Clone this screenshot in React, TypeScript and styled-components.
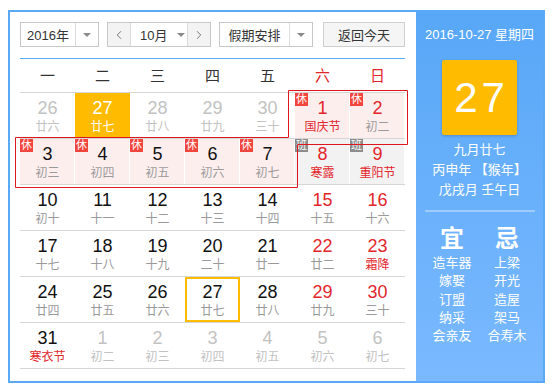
import React from 'react';
import styled, { createGlobalStyle, css } from 'styled-components';
import { ChevronLeft, ChevronRight } from 'lucide-react';

const GlobalStyle = createGlobalStyle`
  html, body { margin: 0; padding: 0; background: #fff; }
  body { font-family: "Liberation Sans", "Noto Sans CJK SC", sans-serif; }
`;

const Page = styled.div`
  padding: 10px 0 0 8px;
`;

const Widget = styled.div`
  display: flex;
  width: 537px;
  height: 373px;
  box-sizing: border-box;
  border: 2px solid #5aa9f7;
  background: #fff;
`;

const Main = styled.div`
  width: 406px;
  box-sizing: border-box;
  padding: 10px 11px 0 10px;
`;

const Toolbar = styled.div`
  display: flex;
  gap: 8px;
  height: 25px;
`;

const Select = styled.div<{ $w: number }>`
  display: flex;
  width: ${(p) => p.$w}px;
  height: 25px;
  box-sizing: border-box;
  border: 1px solid #c8c8c8;
  background: #fff;
  font-size: 13px;
  color: #333;
  white-space: nowrap;
`;

const SelectLabel = styled.div`
  flex: 1;
  display: flex;
  align-items: center;
  justify-content: center;
`;

const SelectArrow = styled.div`
  width: 22px;
  display: flex;
  align-items: center;
  justify-content: center;
  border-left: 1px solid #dcdcdc;
`;

const Caret = styled.span`
  flex: none;
  width: 0;
  height: 0;
  border-left: 4px solid transparent;
  border-right: 4px solid transparent;
  border-top: 4px solid #8a8a8a;
`;

const NavBtn = styled.div<{ $side: 'l' | 'r' }>`
  flex: none;
  width: 22px;
  display: flex;
  align-items: center;
  justify-content: center;
  background: #f3f3f3;
  color: #666;
  ${(p) => (p.$side === 'l' ? 'border-right: 1px solid #dcdcdc;' : 'border-left: 1px solid #dcdcdc;')}
`;

const MonthLabel = styled.div`
  flex: 1;
  min-width: 0;
  display: flex;
  align-items: center;
  padding-left: 9px;
  gap: 10px;
  white-space: nowrap;
`;

const TodayButton = styled.div`
  margin-left: auto;
  width: 82px;
  height: 25px;
  box-sizing: border-box;
  border: 1px solid #cfcfcf;
  background: #f5f5f5;
  font-size: 13px;
  color: #333;
  display: flex;
  align-items: center;
  justify-content: center;
`;

const BlueLine = styled.div`
  margin-top: 11px;
  height: 1px;
  background: #5aa9f7;
`;

const WeekHeader = styled.div`
  display: grid;
  grid-template-columns: repeat(7, 55px);
  height: 33px;
  line-height: 33px;
  font-size: 15px;
  text-align: center;
`;

const WeekDay = styled.div<{ $red?: boolean }>`
  color: ${(p) => (p.$red ? '#e3262c' : '#333')};
`;

const Grid = styled.div`
  position: relative;
  border-top: 1px solid #d6d6d6;
`;

const Row = styled.div`
  display: grid;
  grid-template-columns: repeat(7, 55px);
  border-bottom: 1px solid #d6d6d6;
  &:last-child { border-bottom: none; }
`;

type Bg = 'holiday' | 'work' | 'today' | undefined;
type Tone = 'other' | 'normal' | 'weekend';

const Cell = styled.div<{ $bg?: Bg; $sel?: boolean }>`
  position: relative;
  height: 45px;
  box-sizing: border-box;
  padding-top: 4px;
  text-align: center;
  ${(p) =>
    p.$bg === 'holiday' &&
    css`
      background: #fdeeee;
      box-shadow: inset -1px 0 0 #fff;
    `}
  ${(p) =>
    p.$bg === 'work' &&
    css`
      background: #f2f2f2;
      box-shadow: inset -1px 0 0 #fff;
    `}
  ${(p) =>
    p.$bg === 'today' &&
    css`
      background: #ffbb00;
    `}
  ${(p) =>
    p.$sel &&
    css`
      box-shadow: inset 0 0 0 2px #ffbb00;
    `}
`;

const DayNum = styled.div<{ $tone: Tone; $today?: boolean }>`
  font-size: 18px;
  line-height: 22px;
  color: ${(p) =>
    p.$today ? '#fff' : p.$tone === 'other' ? '#c2c2c2' : p.$tone === 'weekend' ? '#e3262c' : '#111'};
`;

const Lunar = styled.div<{ $tone: Tone; $fest?: boolean; $today?: boolean }>`
  font-size: 12px;
  line-height: 16px;
  color: ${(p) =>
    p.$today ? '#fff' : p.$fest ? '#e3262c' : p.$tone === 'other' ? '#c2c2c2' : '#9a9a9a'};
`;

const Badge = styled.span<{ $kind: 'rest' | 'work' }>`
  position: absolute;
  left: 0;
  top: 0;
  width: 13px;
  height: 13px;
  font-size: 11px;
  line-height: 13px;
  text-align: center;
  color: #fff;
  background: ${(p) => (p.$kind === 'rest' ? '#f2453d' : '#8c8c8c')};
`;

const Outline = styled.svg`
  position: absolute;
  left: -6px;
  top: -4px;
  overflow: visible;
  pointer-events: none;
`;

const Side = styled.div`
  flex: 1;
  background: linear-gradient(#58a7f7, #7ab9ff);
  color: #fff;
  display: flex;
  flex-direction: column;
  align-items: center;
  padding-top: 13px;
`;

const SideDate = styled.div`
  font-size: 13px;
  line-height: 20px;
`;

const BigDay = styled.div`
  margin-top: 15px;
  width: 75px;
  height: 75px;
  background: #ffbb00;
  border-radius: 2px;
  box-shadow: 0 1px 3px rgba(0, 0, 0, 0.2);
  display: flex;
  align-items: center;
  justify-content: center;
  font-size: 42px;
  letter-spacing: 4px;
  text-indent: 4px;
`;

const LunarInfo = styled.div`
  margin-top: 5px;
  font-size: 13px;
  line-height: 20px;
  text-align: center;
`;

const SideRule = styled.div`
  margin-top: 10px;
  width: 110px;
  height: 2px;
  background: rgba(255, 255, 255, 0.35);
`;

const Almanac = styled.div`
  margin-top: 12px;
  display: grid;
  grid-template-columns: 55px 55px;
  text-align: center;
`;

const AlmanacHead = styled.div`
  font-size: 24px;
  line-height: 30px;
  font-weight: bold;
`;

const AlmanacList = styled.div`
  font-size: 13px;
  line-height: 18.25px;
  white-space: nowrap;
`;

type C = { d: number; l: string; tone: Tone; bg?: Bg; badge?: 'rest' | 'work'; fest?: boolean; sel?: boolean };

const o = (d: number, l: string): C => ({ d, l, tone: 'other' });
const n = (d: number, l: string): C => ({ d, l, tone: 'normal' });
const w = (d: number, l: string): C => ({ d, l, tone: 'weekend' });

const rows: C[][] = [
  [
    o(26, '廿六'),
    { d: 27, l: '廿七', tone: 'other', bg: 'today' },
    o(28, '廿八'),
    o(29, '廿九'),
    o(30, '三十'),
    { d: 1, l: '国庆节', tone: 'weekend', bg: 'holiday', badge: 'rest', fest: true },
    { d: 2, l: '初二', tone: 'weekend', bg: 'holiday', badge: 'rest' },
  ],
  [
    { d: 3, l: '初三', tone: 'normal', bg: 'holiday', badge: 'rest' },
    { d: 4, l: '初四', tone: 'normal', bg: 'holiday', badge: 'rest' },
    { d: 5, l: '初五', tone: 'normal', bg: 'holiday', badge: 'rest' },
    { d: 6, l: '初六', tone: 'normal', bg: 'holiday', badge: 'rest' },
    { d: 7, l: '初七', tone: 'normal', bg: 'holiday', badge: 'rest' },
    { d: 8, l: '寒露', tone: 'weekend', bg: 'work', badge: 'work', fest: true },
    { d: 9, l: '重阳节', tone: 'weekend', bg: 'work', badge: 'work', fest: true },
  ],
  [n(10, '初十'), n(11, '十一'), n(12, '十二'), n(13, '十三'), n(14, '十四'), w(15, '十五'), w(16, '十六')],
  [n(17, '十七'), n(18, '十八'), n(19, '十九'), n(20, '二十'), n(21, '廿一'), w(22, '廿二'), { d: 23, l: '霜降', tone: 'weekend', fest: true }],
  [n(24, '廿四'), n(25, '廿五'), n(26, '廿六'), { d: 27, l: '廿七', tone: 'normal', sel: true }, n(28, '廿八'), w(29, '廿九'), w(30, '三十')],
  [{ d: 31, l: '寒衣节', tone: 'normal', fest: true }, o(1, '初二'), o(2, '初三'), o(3, '初四'), o(4, '初五'), o(5, '初六'), o(6, '初七')],
];

const weekdays = ['一', '二', '三', '四', '五', '六', '日'];
const yi = ['造车器', '嫁娶', '订盟', '纳采', '会亲友'];
const ji = ['上梁', '开光', '造屋', '架马', '合寿木'];

export default function App() {
  return (
    <Page>
      <GlobalStyle />
      <Widget>
        <Main>
          <Toolbar>
            <Select $w={79}>
              <SelectLabel>2016年</SelectLabel>
              <SelectArrow><Caret /></SelectArrow>
            </Select>
            <Select $w={104}>
              <NavBtn $side="l"><ChevronLeft size={14} strokeWidth={1.5} /></NavBtn>
              <MonthLabel>10月<Caret /></MonthLabel>
              <NavBtn $side="r"><ChevronRight size={14} strokeWidth={1.5} /></NavBtn>
            </Select>
            <Select $w={94}>
              <SelectLabel>假期安排</SelectLabel>
              <SelectArrow><Caret /></SelectArrow>
            </Select>
            <TodayButton>返回今天</TodayButton>
          </Toolbar>
          <BlueLine />
          <WeekHeader>
            {weekdays.map((d, i) => (
              <WeekDay key={d} $red={i >= 5}>{d}</WeekDay>
            ))}
          </WeekHeader>
          <Grid>
            {rows.map((r, ri) => (
              <Row key={ri}>
                {r.map((c, ci) => (
                  <Cell key={ci} $bg={c.bg} $sel={c.sel}>
                    {c.badge && <Badge $kind={c.badge}>{c.badge === 'rest' ? '休' : '班'}</Badge>}
                    <DayNum $tone={c.tone} $today={c.bg === 'today'}>{c.d}</DayNum>
                    <Lunar $tone={c.tone} $fest={c.fest} $today={c.bg === 'today'}>{c.l}</Lunar>
                  </Cell>
                ))}
              </Row>
            ))}
            <Outline width="400" height="104" viewBox="0 0 400 104">
              <path
                d="M274.5 1.5 H393.5 V55.5 H283.5 V98.5 H1.5 V48.5 H274.5 Z"
                fill="none"
                stroke="#e0161e"
                strokeWidth="1"
              />
            </Outline>
          </Grid>
        </Main>
        <Side>
          <SideDate>2016-10-27 星期四</SideDate>
          <BigDay>27</BigDay>
          <LunarInfo>
            <div>九月廿七</div>
            <div>丙申年 【猴年】</div>
            <div>戊戌月 壬午日</div>
          </LunarInfo>
          <SideRule />
          <Almanac>
            <AlmanacHead>宜</AlmanacHead>
            <AlmanacHead>忌</AlmanacHead>
            <AlmanacList>{yi.map((t) => <div key={t}>{t}</div>)}</AlmanacList>
            <AlmanacList>{ji.map((t) => <div key={t}>{t}</div>)}</AlmanacList>
          </Almanac>
        </Side>
      </Widget>
    </Page>
  );
}
